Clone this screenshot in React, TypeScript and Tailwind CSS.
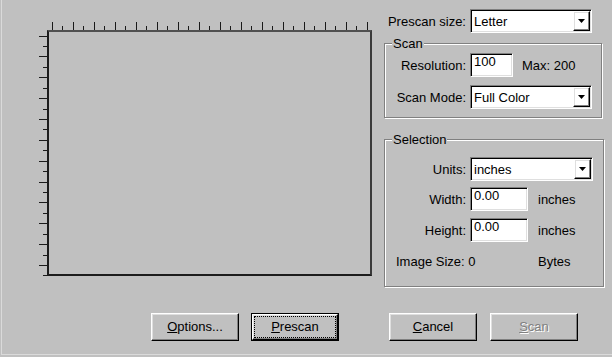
import React from "react";

const raised =
  "border border-t-white border-l-white border-r-black border-b-black shadow-[inset_-1px_-1px_0_#808080,inset_1px_1px_0_#dfdfdf]";
const sunken =
  "border border-t-[#808080] border-l-[#808080] border-r-white border-b-white shadow-[inset_1px_1px_0_#000,inset_-1px_-1px_0_#dfdfdf] bg-white";
const etched =
  "border border-[#808080] shadow-[inset_1px_1px_0_#fff,1px_1px_0_#fff]";

const hTicks = Array.from({ length: 31 }, (_, k) => k);
const vTicks = Array.from({ length: 24 }, (_, k) => k);

const Combo: React.FC<{ value: string; w: string }> = ({ value, w }) => {
  return (
    <div className={`${sunken} ${w} h-[24px] flex items-center`}>
      <span className="pl-[3px] flex-1 leading-[15px]">{value}</span>
      <div
        className={`${raised} w-[17px] h-[20px] mr-[1px] flex items-center justify-center`}
      >
        <svg width="7" height="4" viewBox="0 0 7 4">
          <path d="M0 0h7L3.5 4z" fill="#000" />
        </svg>
      </div>
    </div>
  );
};

const Edit: React.FC<{ value: string; w: string }> = ({ value, w }) => {
  return (
    <div className={`${sunken} ${w} h-[24px] pl-[3px] pt-[1px] leading-[13px]`}>
      {value}
    </div>
  );
};

const Row: React.FC<{
  label: string;
  lw: string;
  className?: string;
  children: React.ReactNode;
}> = ({ label, lw, className, children }) => {
  return (
    <div className={`flex items-center ${className ?? ""}`}>
      <span className={`${lw} text-right leading-[15px]`}>{label}</span>
      <div className="ml-[4px] flex items-center">{children}</div>
    </div>
  );
};

const Btn: React.FC<{
  children: React.ReactNode;
  def?: boolean;
  disabled?: boolean;
}> = ({ children, def, disabled }) => {
  const text = disabled
    ? "text-[#808080] [text-shadow:1px_1px_0_#fff]"
    : "text-black";
  if (def) {
    return (
      <button className="w-[88px] h-[28px] border border-black flex">
        <div className={`${raised} flex-1 p-[1px] flex`}>
          <div className="flex-1 border border-dotted border-black flex items-center justify-center">
            <span className={text}>{children}</span>
          </div>
        </div>
      </button>
    );
  }
  return (
    <button
      className={`${raised} w-[88px] h-[28px] flex items-center justify-center`}
    >
      <span className={text}>{children}</span>
    </button>
  );
};

export default function App() {
  return (
    <div className="w-[612px] h-[357px] bg-[#c0c0c0] pl-px overflow-hidden font-['Liberation_Sans',Arial,sans-serif] text-[13px] text-black">
      <div className="h-[355px] border-l border-b border-[#dadada] flex flex-col">
        <div className="h-[313px] flex">
          {/* preview area with rulers */}
          <div className="pl-[36px] pt-[21px]">
            <div className="flex">
              <div className="w-[9px]" />
              <svg width="325" height="9">
                {hTicks.map((k) => {
                  const x = Math.floor(5 + 10.5 * k) + 0.5;
                  return (
                    <line
                      key={k}
                      x1={x}
                      x2={x}
                      y1={k % 2 === 0 ? 1 : 5}
                      y2={9}
                      stroke="#1a1a1a"
                      strokeWidth="1"
                    />
                  );
                })}
              </svg>
            </div>
            <div className="flex">
              <svg width="9" height="246">
                {vTicks.map((k) => {
                  const y = Math.floor(6 + 10.43 * k) + 0.5;
                  return (
                    <line
                      key={k}
                      y1={y}
                      y2={y}
                      x1={k % 2 === 0 ? 1 : 5}
                      x2={9}
                      stroke="#1a1a1a"
                      strokeWidth="1"
                    />
                  );
                })}
              </svg>
              <div className="w-[325px] h-[246px] border-2 border-[#1c1c1c] border-t-[#505050] border-r-[#3a3a3a]" />
            </div>
          </div>

          {/* settings panel */}
          <div className="ml-[12px] pt-[9px] w-[220px]">
            <Row label="Prescan size:" lw="w-[82px]">
              <Combo value="Letter" w="w-[122px]" />
            </Row>

            <fieldset className={`${etched} mt-[3px] w-[218px] pb-[8px]`}>
              <legend className="ml-[7px] px-[1px] leading-[15px] bg-[#c0c0c0]">
                Scan
              </legend>
              <Row label="Resolution:" lw="w-[81px]" className="mt-[2px]">
                <Edit value="100" w="w-[43px]" />
                <span className="ml-[9px] leading-[15px]">Max: 200</span>
              </Row>
              <Row label="Scan Mode:" lw="w-[81px]" className="mt-[8px]">
                <Combo value="Full Color" w="w-[122px]" />
              </Row>
            </fieldset>

            <fieldset className={`${etched} mt-[14px] w-[220px] pb-[17px]`}>
              <legend className="ml-[7px] px-[1px] leading-[15px] bg-[#c0c0c0]">
                Selection
              </legend>
              <Row label="Units:" lw="w-[81px]" className="mt-[10px]">
                <Combo value="inches" w="w-[123px]" />
              </Row>
              <Row label="Width:" lw="w-[81px]" className="mt-[6px]">
                <Edit value="0.00" w="w-[58px]" />
                <span className="ml-[10px] leading-[15px]">inches</span>
              </Row>
              <Row label="Height:" lw="w-[81px]" className="mt-[7px]">
                <Edit value="0.00" w="w-[58px]" />
                <span className="ml-[10px] leading-[15px]">inches</span>
              </Row>
              <div className="flex mt-[12px] leading-[15px]">
                <span className="ml-[11px] w-[142px]">Image Size: 0</span>
                <span>Bytes</span>
              </div>
            </fieldset>
          </div>
        </div>

        {/* buttons */}
        <div className="flex pl-[149px]">
          <Btn>
            <span className="underline">O</span>ptions...
          </Btn>
          <div className="ml-[12px]">
            <Btn def>
              <span className="underline">P</span>rescan
            </Btn>
          </div>
          <div className="ml-[50px]">
            <Btn>
              <span className="underline">C</span>ancel
            </Btn>
          </div>
          <div className="ml-[13px]">
            <Btn disabled>
              <span className="underline">S</span>can
            </Btn>
          </div>
        </div>
      </div>
    </div>
  );
}
